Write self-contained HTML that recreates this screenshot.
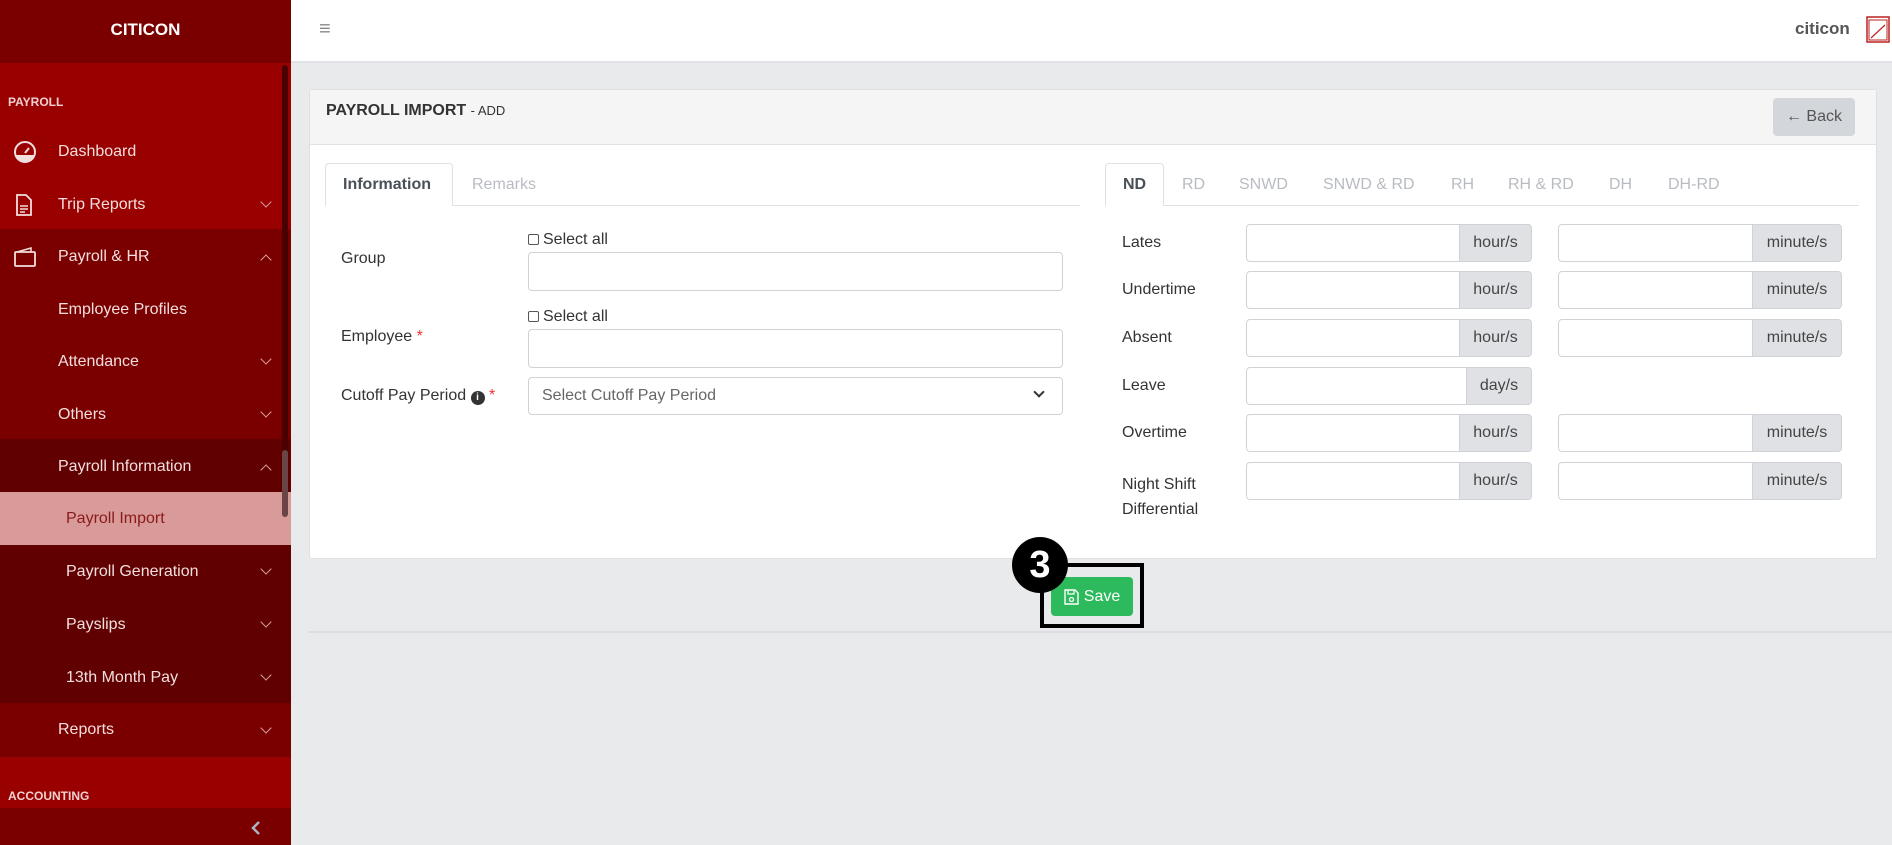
<!DOCTYPE html>
<html><head><meta charset="utf-8"><style>
*{box-sizing:border-box;margin:0;padding:0}
body{width:1892px;height:845px;overflow:hidden;background:#e9eaec;font-family:"Liberation Sans",sans-serif;position:relative}
.abs{position:absolute}
#sb{left:0;top:0;width:291px;height:845px;background:#990000}
.row{position:absolute;left:0;width:291px;height:53px;color:#f3dede;font-size:16px;display:flex;align-items:center}
.row .t{position:absolute;left:58px}
.row .s{position:absolute;left:66px}
.chev{position:absolute;left:262px;width:8px;height:8px;border-right:1.2px solid #d9a0a0;border-bottom:1.2px solid #d9a0a0;transform:rotate(45deg)}
.chev.up{transform:rotate(-135deg)}
.sec{position:absolute;left:8px;color:#f0d0d0;font-weight:bold;font-size:12px}
.lbl{position:absolute;font-size:16px;color:#333}
.inp{position:absolute;background:#fff;border:1px solid #cfd3d8;border-radius:4px}
.add{position:absolute;background:#dfe1e5;border:1px solid #cfd3d8;border-radius:0 4px 4px 0;font-size:16px;color:#444;display:flex;align-items:center;justify-content:center}
.tab{position:absolute;top:176px;font-size:16px;color:#b8bcc2}
.cb{display:inline-block;width:11px;height:11px;border:1px solid #555;border-radius:2px;vertical-align:-1px;margin-right:4px}
</style></head><body>
<div id="sb" class="abs">
 <div class="abs" style="left:0;top:0;width:291px;height:63px;background:#7a0000;color:#fff;font-weight:bold;font-size:17px;text-align:center;line-height:60px">CITICON</div>
 <div class="sec" style="top:95px">PAYROLL</div>
 <div class="row" style="top:125px"><svg class="abs" style="left:13px" width="24" height="24" viewBox="0 0 24 24"><circle cx="12" cy="12" r="10" fill="none" stroke="#f3dede" stroke-width="2"/><path d="M3 15h18v2a10 10 0 0 1-18 0z" fill="#f3dede"/><path d="M12 13l4-5" stroke="#f3dede" stroke-width="2"/></svg><span class="t">Dashboard</span></div>
 <div class="row" style="top:178px"><svg class="abs" style="left:15px" width="18" height="22" viewBox="0 0 18 22"><path d="M2 1h9l5 5v15H2z" fill="none" stroke="#f3dede" stroke-width="1.8"/><path d="M5 12h8M5 15h8M5 18h5" stroke="#f3dede" stroke-width="1.5"/></svg><span class="t">Trip Reports</span><i class="chev" style="top:20px"></i></div>
 <div class="abs" style="left:0;top:229px;width:291px;height:474px;background:#7a0000"></div>
 <div class="abs" style="left:0;top:439px;width:291px;height:264px;background:#600000"></div>
 <div class="row" style="top:230px"><svg class="abs" style="left:13px" width="24" height="22" viewBox="0 0 24 22"><rect x="2" y="6" width="20" height="14" rx="1" fill="none" stroke="#f3dede" stroke-width="1.8"/><path d="M4 6l14-4v4" fill="none" stroke="#f3dede" stroke-width="1.5"/></svg><span class="t">Payroll &amp; HR</span><i class="chev up" style="top:26px"></i></div>
 <div class="row" style="top:283px"><span class="t">Employee Profiles</span></div>
 <div class="row" style="top:335px"><span class="t">Attendance</span><i class="chev" style="top:20px"></i></div>
 <div class="row" style="top:388px"><span class="t">Others</span><i class="chev" style="top:20px"></i></div>
 <div class="row" style="top:440px"><span class="t">Payroll Information</span><i class="chev up" style="top:26px"></i></div>
 <div class="row" style="top:492px;background:#d99a9a;color:#8b1a1a"><span class="s">Payroll Import</span></div>
 <div class="row" style="top:545px"><span class="s">Payroll Generation</span><i class="chev" style="top:20px"></i></div>
 <div class="row" style="top:598px"><span class="s">Payslips</span><i class="chev" style="top:20px"></i></div>
 <div class="row" style="top:651px"><span class="s">13th Month Pay</span><i class="chev" style="top:20px"></i></div>
 <div class="row" style="top:703px;height:54px;background:#7a0000"><span class="t">Reports</span><i class="chev" style="top:21px"></i></div>
 <div class="sec" style="top:789px">ACCOUNTING</div>
 <div class="abs" style="left:0;top:808px;width:291px;height:37px;background:#7a0000"></div>
 <svg class="abs" style="left:250px;top:820px" width="12" height="16" viewBox="0 0 12 16"><path d="M9 2L3 8l6 6" fill="none" stroke="#a9b4c2" stroke-width="2.5"/></svg>
 <div class="abs" style="left:282px;top:65px;width:6px;height:450px;background:#4a0000;border-radius:3px"></div>
 <div class="abs" style="left:282px;top:450px;width:6px;height:67px;background:#6b4545;border-radius:3px"></div>
</div>
<div class="abs" style="left:291px;top:0;width:1601px;height:63px;background:#fff;border-bottom:2px solid #e1e3e6"></div>
<div class="abs" style="left:319px;top:18px;font-size:20px;color:#888">&#8801;</div>
<div class="abs" style="left:1795px;top:19px;font-size:17px;font-weight:bold;color:#555">citicon</div>
<svg class="abs" style="left:1866px;top:16px" width="24" height="27" viewBox="0 0 24 27"><rect x="1" y="1" width="22" height="25" fill="#fff" stroke="#b22" stroke-width="1.5"/><rect x="3" y="4" width="18" height="20" fill="none" stroke="#b22"/><path d="M5 22L19 9" stroke="#b22" stroke-width="1.2"/></svg>

<div class="abs" style="left:309px;top:89px;width:1568px;height:470px;background:#fff;border:1px solid #e0e0e0;border-radius:3px"></div>
<div class="abs" style="left:310px;top:90px;width:1566px;height:55px;background:#f5f5f5;border-bottom:1px solid #e2e2e2"></div>
<div class="abs" style="left:326px;top:102px;font-size:16px;color:#333"><b>PAYROLL IMPORT</b> <span style="font-size:13px">- ADD</span></div>
<div class="abs" style="left:1773px;top:98px;width:82px;height:38px;background:#d3d6db;border-radius:4px;color:#555;font-size:16px;display:flex;align-items:center;justify-content:center">&#8592; Back</div>

<div class="abs" style="left:325px;top:205px;width:755px;height:1px;background:#dee2e6"></div>
<div class="abs" style="left:325px;top:163px;width:128px;height:43px;background:#fff;border:1px solid #dee2e6;border-bottom:none;border-radius:4px 4px 0 0"></div>
<div class="tab" style="left:343px;color:#495057;font-weight:bold">Information</div>
<div class="tab" style="left:472px">Remarks</div>

<div class="lbl" style="left:341px;top:250px">Group</div>
<div class="abs" style="left:528px;top:231px;font-size:16px;color:#333"><span class="cb"></span>Select all</div>
<div class="inp" style="left:528px;top:252px;width:535px;height:39px"></div>
<div class="lbl" style="left:341px;top:328px">Employee <span style="color:#e33">*</span></div>
<div class="abs" style="left:528px;top:308px;font-size:16px;color:#333"><span class="cb"></span>Select all</div>
<div class="inp" style="left:528px;top:329px;width:535px;height:39px"></div>
<div class="lbl" style="left:341px;top:387px">Cutoff Pay Period <span style="display:inline-block;width:14px;height:14px;border-radius:50%;background:#333;color:#fff;font-size:10px;text-align:center;line-height:14px;font-weight:bold">i</span> <span style="color:#e33">*</span></div>
<div class="inp" style="left:528px;top:377px;width:535px;height:38px;font-size:16px;color:#666;padding:9px 13px">Select Cutoff Pay Period</div>
<div class="abs" style="left:1035px;top:388px;width:8px;height:8px;border-right:2px solid #333;border-bottom:2px solid #333;transform:rotate(45deg)"></div>

<div class="abs" style="left:1105px;top:205px;width:754px;height:1px;background:#dee2e6"></div>
<div class="abs" style="left:1105px;top:163px;width:59px;height:43px;background:#fff;border:1px solid #dee2e6;border-bottom:none;border-radius:4px 4px 0 0"></div>
<div class="tab" style="left:1123px;color:#495057;font-weight:bold">ND</div>
<div class="tab" style="left:1182px">RD</div>
<div class="tab" style="left:1239px">SNWD</div>
<div class="tab" style="left:1323px">SNWD &amp; RD</div>
<div class="tab" style="left:1451px">RH</div>
<div class="tab" style="left:1508px">RH &amp; RD</div>
<div class="tab" style="left:1609px">DH</div>
<div class="tab" style="left:1668px">DH-RD</div>

<div class="lbl" style="left:1122px;top:234px">Lates</div>
<div class="inp" style="left:1246px;top:224px;width:218px;height:38px"></div><div class="add" style="left:1459px;top:224px;width:73px;height:38px">hour/s</div>
<div class="inp" style="left:1558px;top:224px;width:199px;height:38px"></div><div class="add" style="left:1752px;top:224px;width:90px;height:38px">minute/s</div>

<div class="lbl" style="left:1122px;top:281px">Undertime</div>
<div class="inp" style="left:1246px;top:271px;width:218px;height:38px"></div><div class="add" style="left:1459px;top:271px;width:73px;height:38px">hour/s</div>
<div class="inp" style="left:1558px;top:271px;width:199px;height:38px"></div><div class="add" style="left:1752px;top:271px;width:90px;height:38px">minute/s</div>

<div class="lbl" style="left:1122px;top:329px">Absent</div>
<div class="inp" style="left:1246px;top:319px;width:218px;height:38px"></div><div class="add" style="left:1459px;top:319px;width:73px;height:38px">hour/s</div>
<div class="inp" style="left:1558px;top:319px;width:199px;height:38px"></div><div class="add" style="left:1752px;top:319px;width:90px;height:38px">minute/s</div>

<div class="lbl" style="left:1122px;top:377px">Leave</div>
<div class="inp" style="left:1246px;top:367px;width:225px;height:38px"></div><div class="add" style="left:1466px;top:367px;width:66px;height:38px">day/s</div>

<div class="lbl" style="left:1122px;top:424px">Overtime</div>
<div class="inp" style="left:1246px;top:414px;width:218px;height:38px"></div><div class="add" style="left:1459px;top:414px;width:73px;height:38px">hour/s</div>
<div class="inp" style="left:1558px;top:414px;width:199px;height:38px"></div><div class="add" style="left:1752px;top:414px;width:90px;height:38px">minute/s</div>

<div class="lbl" style="left:1122px;top:472px;line-height:25px">Night Shift<br>Differential</div>
<div class="inp" style="left:1246px;top:462px;width:218px;height:38px"></div><div class="add" style="left:1459px;top:462px;width:73px;height:38px">hour/s</div>
<div class="inp" style="left:1558px;top:462px;width:199px;height:38px"></div><div class="add" style="left:1752px;top:462px;width:90px;height:38px">minute/s</div>

<div class="abs" style="left:309px;top:631px;width:1583px;height:2px;background:#dcdde0"></div>
<div class="abs" style="left:1040px;top:563px;width:104px;height:65px;border:4px solid #000"></div>
<div class="abs" style="left:1051px;top:577px;width:82px;height:39px;background:#2dba5c;border-radius:4px;color:#fff;font-size:16px;display:flex;align-items:center;justify-content:center;gap:5px"><svg width="15" height="16" viewBox="0 0 15 16"><path d="M1 1h10l3 3v11H1z" fill="none" stroke="#fff" stroke-width="1.4"/><path d="M4 1v4h6V1" fill="none" stroke="#fff" stroke-width="1.2"/><circle cx="7.5" cy="10.5" r="2" fill="none" stroke="#fff" stroke-width="1.3"/></svg>Save</div>
<div class="abs" style="left:1012px;top:537px;width:56px;height:56px;border-radius:50%;background:#000;color:#fff;font-weight:bold;font-size:38px;text-align:center;line-height:56px">3</div>
</body></html>
